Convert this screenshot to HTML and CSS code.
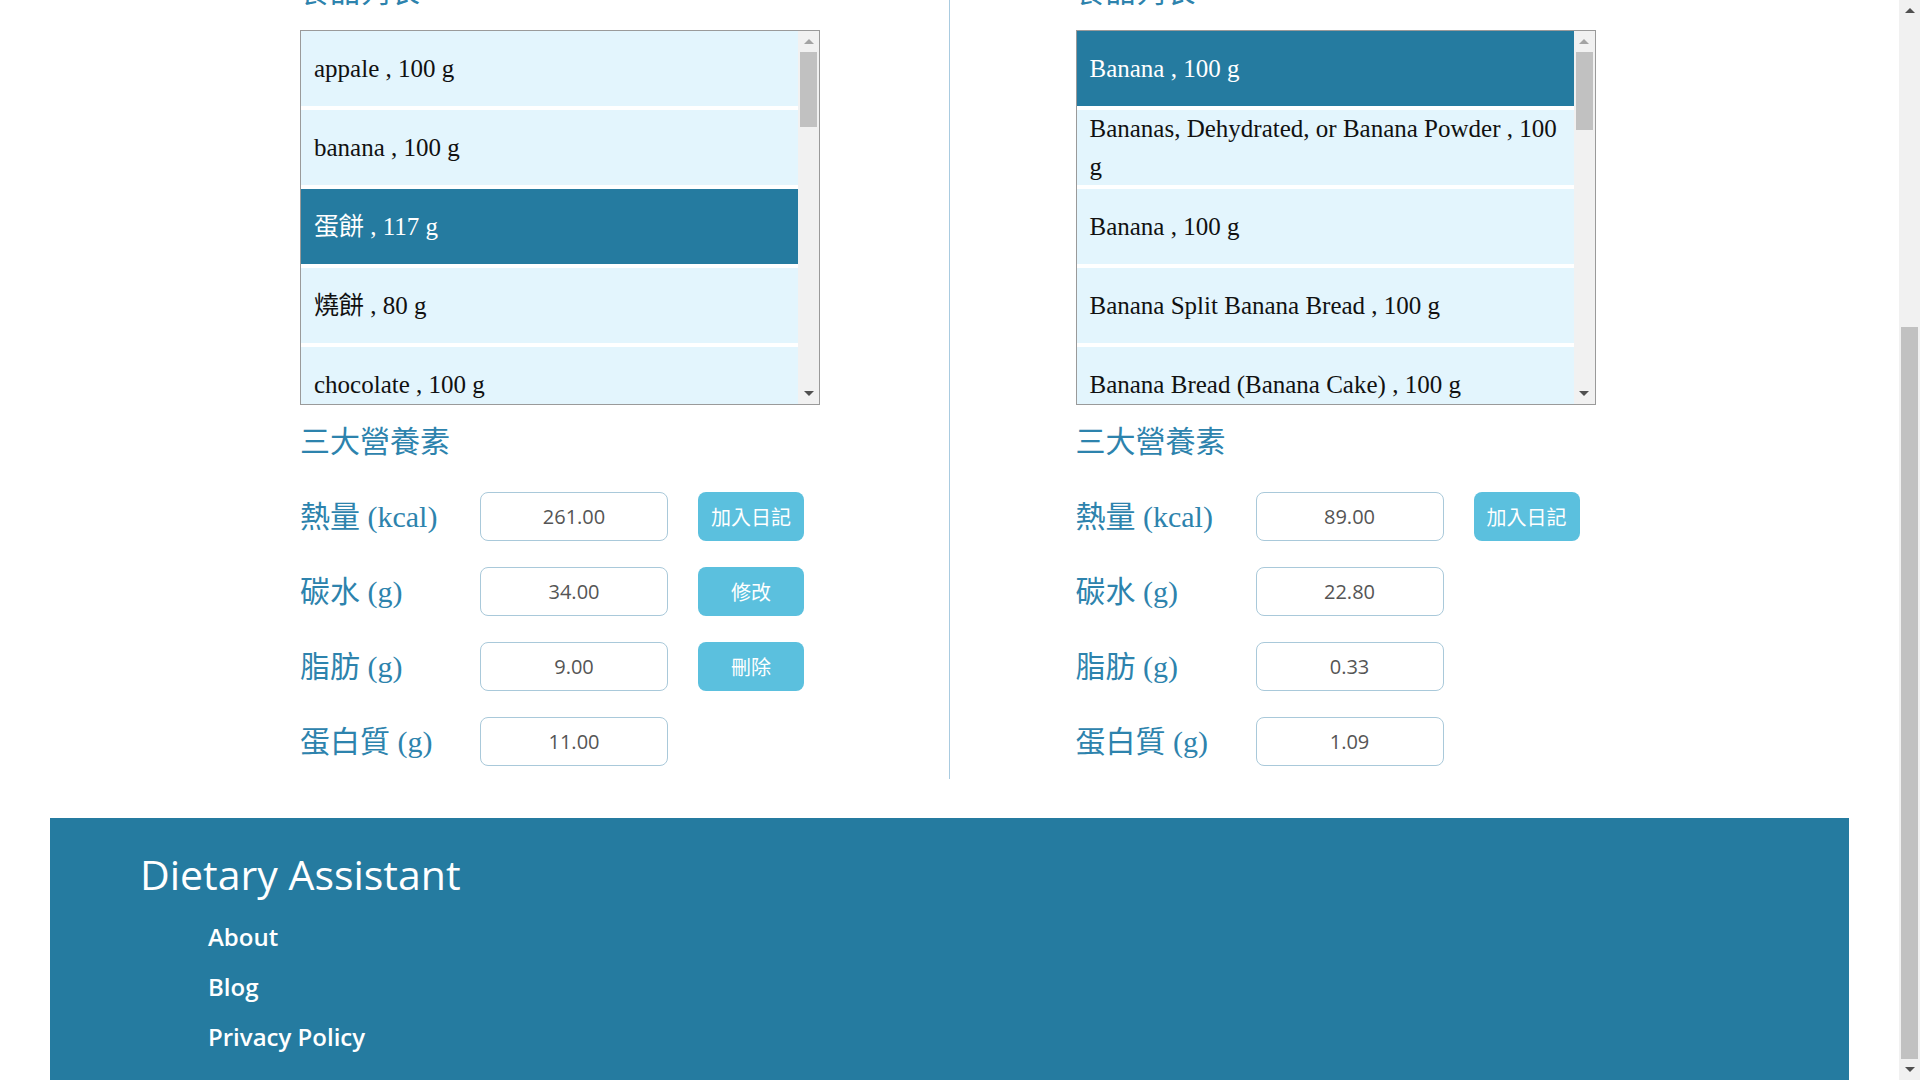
FILE: index.html
```html
<!DOCTYPE html>
<html lang="zh-Hant">
<head>
<meta charset="utf-8">
<title>Dietary Assistant</title>
<link rel="stylesheet" href="styles.css">
</head>
<body>
<header class="navbar">
  <span class="brand">Dietary Assistant</span>
  <nav class="nav-links"><a href="#">飲食日記</a><a href="#">食品查詢</a></nav>
</header>
<section class="search">
  <h2 class="section-title">搜尋食品</h2>
  <div class="search-row"><input class="search-input" value="banana"><button class="btn">搜尋</button></div>
</section>
<main class="columns">
  <section class="col col-left">
    <h2 class="section-title list-title">食品列表</h2>
    <div class="listbox">
      <div class="list-items">
        <div class="item">appale , 100 g</div>
        <div class="item">banana , 100 g</div>
        <div class="item selected">蛋餅 , 117 g</div>
        <div class="item">燒餅 , 80 g</div>
        <div class="item">chocolate , 100 g</div>
        <div class="item">rice , 100 g</div>
        <div class="item">milk , 240 g</div>
      </div>
      <div class="scrollbar">
        <div class="sb-btn"><span class="arrow-up disabled"></span></div>
        <div class="sb-track"><div class="sb-thumb"></div></div>
        <div class="sb-btn"><span class="arrow-down"></span></div>
      </div>
    </div>
    <h2 class="section-title nutrients">三大營養素</h2>
    <div class="row"><label class="label">熱量 (kcal)</label><input class="value" value="261.00"><button class="btn">加入日記</button></div>
    <div class="row"><label class="label">碳水 (g)</label><input class="value" value="34.00"><button class="btn">修改</button></div>
    <div class="row"><label class="label">脂肪 (g)</label><input class="value" value="9.00"><button class="btn">刪除</button></div>
    <div class="row"><label class="label">蛋白質 (g)</label><input class="value" value="11.00"></div>
  </section>
  <section class="col col-right">
    <h2 class="section-title list-title">食品列表</h2>
    <div class="listbox">
      <div class="list-items">
        <div class="item selected">Banana , 100 g</div>
        <div class="item">Bananas, Dehydrated, or Banana Powder , 100 g</div>
        <div class="item">Banana , 100 g</div>
        <div class="item">Banana Split Banana Bread , 100 g</div>
        <div class="item">Banana Bread (Banana Cake) , 100 g</div>
        <div class="item">Banana Chips , 100 g</div>
        <div class="item">Banana Pepper , 100 g</div>
      </div>
      <div class="scrollbar">
        <div class="sb-btn"><span class="arrow-up disabled"></span></div>
        <div class="sb-track"><div class="sb-thumb tall"></div></div>
        <div class="sb-btn"><span class="arrow-down"></span></div>
      </div>
    </div>
    <h2 class="section-title nutrients">三大營養素</h2>
    <div class="row"><label class="label">熱量 (kcal)</label><input class="value" value="89.00"><button class="btn">加入日記</button></div>
    <div class="row"><label class="label">碳水 (g)</label><input class="value" value="22.80"></div>
    <div class="row"><label class="label">脂肪 (g)</label><input class="value" value="0.33"></div>
    <div class="row"><label class="label">蛋白質 (g)</label><input class="value" value="1.09"></div>
  </section>
</main>
<footer class="footer">
  <h3 class="footer-title">Dietary Assistant</h3>
  <ul class="footer-links">
    <li><a href="#">About</a></li>
    <li><a href="#">Blog</a></li>
    <li><a href="#">Privacy Policy</a></li>
  </ul>
</footer>
<div class="page-scrollbar">
  <div class="psb-btn"><span class="arrow-up"></span></div>
  <div class="psb-track"><div class="psb-thumb"></div></div>
  <div class="psb-btn"><span class="arrow-down"></span></div>
</div>
<script src="script.js"></script>
</body>
</html>
```

FILE: styles.css
```css
html, body {
  margin: 0;
  padding: 0;
}
body {
  margin-right: 21px;
  background: #ffffff;
  font-family: "Liberation Serif", "Noto Sans CJK TC", serif;
  color: #000;
}

/* hidden upper part of the page */
.navbar {
  height: 70px;
  display: flex;
  align-items: center;
  justify-content: space-between;
  padding: 0 90px;
  background: #257ba0;
  margin: 0 50px;
}
.brand {
  font-family: "Open Sans", sans-serif;
  font-size: 28px;
  color: #fff;
}
.nav-links a {
  font-family: "Noto Sans CJK TC", sans-serif;
  color: #fff;
  text-decoration: none;
  margin-left: 30px;
  font-size: 20px;
}
.search {
  height: 300px;
  padding: 25px 0 0 301px;
  box-sizing: border-box;
}
.search-row {
  display: flex;
  gap: 30px;
  margin-top: 20px;
}
.search-input {
  width: 520px;
  height: 49px;
  box-sizing: border-box;
  border: 1px solid #a9c9da;
  border-radius: 8px;
  font-family: "Open Sans", sans-serif;
  font-size: 20px;
  padding: 0 14px;
}

/* columns */
.columns {
  display: grid;
  grid-template-columns: 1fr 1fr;
  margin-bottom: 39px;
}
.col {
  padding-top: 60px;
  padding-bottom: 13px;
}
.col-left {
  border-right: 1px solid #a9cbe0;
  padding-left: 300px;
}
.col-right {
  padding-left: 126px;
}

.section-title {
  margin: 0;
  font-family: "Noto Sans CJK TC", sans-serif;
  font-weight: normal;
  font-size: 30px;
  line-height: 40px;
  color: #2d83ad;
}
.list-title {
  margin-bottom: 21px;
}
.nutrients {
  margin-top: 14px;
  margin-bottom: 33px;
}

/* list box with its scrollbar */
.listbox {
  width: 520px;
  height: 375px;
  box-sizing: border-box;
  border: 1px solid #9a9a9a;
  display: flex;
  background: #fff;
}
.list-items {
  flex: 1;
  overflow: hidden;
}
.item {
  height: 75px;
  margin-bottom: 4px;
  padding: 0 8px 0 13px;
  display: flex;
  align-items: center;
  background: #e3f5fd;
  font-size: 25px;
  line-height: 38px;
  color: #111;
}
.item.selected {
  background: #257ba0;
  color: #fff;
}
.scrollbar {
  width: 21px;
  flex: none;
  background: #f1f1f1;
  display: flex;
  flex-direction: column;
}
.sb-btn {
  height: 21px;
  flex: none;
  display: flex;
  align-items: center;
  justify-content: center;
}
.sb-track {
  flex: 1;
  padding: 0 2px;
}
.sb-thumb {
  height: 75px;
  background: #c1c1c1;
}
.sb-thumb.tall {
  height: 78px;
}
.arrow-up {
  width: 0;
  height: 0;
  border-left: 5px solid transparent;
  border-right: 5px solid transparent;
  border-bottom: 5px solid #505050;
}
.arrow-down {
  width: 0;
  height: 0;
  border-left: 5px solid transparent;
  border-right: 5px solid transparent;
  border-top: 5px solid #505050;
}
.arrow-up.disabled {
  border-bottom-color: #a3a3a3;
}

/* page scrollbar */
.page-scrollbar {
  position: fixed;
  top: 0;
  right: 0;
  bottom: 0;
  width: 21px;
  background: #f1f1f1;
  display: flex;
  flex-direction: column;
}
.psb-btn {
  height: 21px;
  flex: none;
  display: flex;
  align-items: center;
  justify-content: center;
}
.psb-track {
  flex: 1;
  padding: 306px 2px 0;
  display: flex;
  flex-direction: column;
}
.psb-thumb {
  flex: 1;
  background: #c1c1c1;
}

/* rows */
.row {
  display: flex;
  align-items: center;
  height: 49px;
  margin-bottom: 26px;
}
.row:last-child {
  margin-bottom: 0;
}
.label {
  width: 180px;
  flex: none;
  font-size: 30px;
  line-height: 40px;
  color: #2d83ad;
  font-family: "Liberation Serif", "Noto Sans CJK TC", serif;
}
.value {
  width: 188px;
  height: 49px;
  box-sizing: border-box;
  border: 1px solid #a9c9da;
  border-radius: 8px;
  text-align: center;
  font-family: "Open Sans", sans-serif;
  font-size: 20px;
  color: #555;
  background: #fff;
  padding: 0;
}
.btn {
  margin-left: 30px;
  width: 106px;
  height: 49px;
  border: none;
  border-radius: 8px;
  background: #5bc0de;
  color: #fff;
  font-family: "Noto Sans CJK TC", sans-serif;
  font-size: 20px;
  padding: 0;
}
.search-row .btn {
  margin-left: 0;
}

/* footer */
.footer {
  margin: 0 50px;
  background: #257ba0;
  padding: 30px 90px 18px;
  color: #fff;
}
.footer-title {
  margin: 0;
  font-family: "Open Sans", sans-serif;
  font-weight: normal;
  font-size: 41px;
  line-height: 52px;
}
.footer-links {
  list-style: none;
  margin: 12px 0 0 68px;
  padding: 0;
}
.footer-links li {
  line-height: 50px;
  height: 50px;
}
.footer-links a {
  font-family: "Open Sans", sans-serif;
  font-size: 24px;
  font-weight: 600;
  color: #fff;
  text-decoration: none;
}
```

FILE: script.js
```js
window.scrollTo(0, document.documentElement.scrollHeight);
window.addEventListener('load', function () {
  window.scrollTo(0, document.documentElement.scrollHeight);
});
```
